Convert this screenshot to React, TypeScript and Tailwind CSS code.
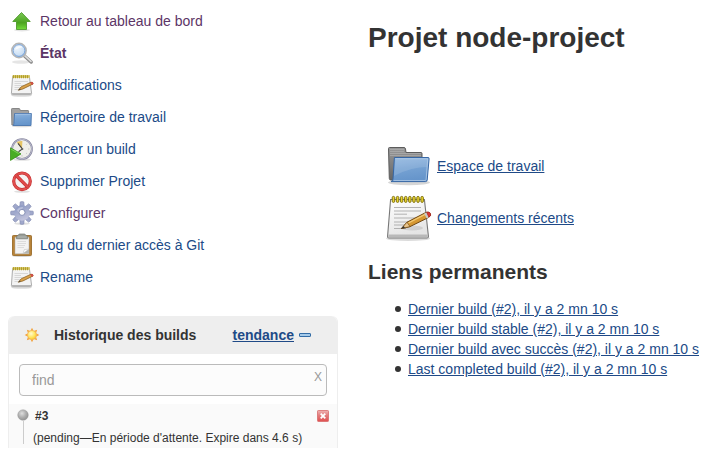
import type { ReactNode } from "react";

type IconProps = { className?: string };

function ArrowUpIcon({ className }: IconProps) {
  return (
    <svg viewBox="0 0 24 24" className={className} aria-hidden="true">
      <defs>
        <linearGradient id="arrowFill" x1="0" y1="0" x2="0" y2="1">
          <stop offset="0" stopColor="#7cc956" />
          <stop offset="0.6" stopColor="#4ba41f" />
          <stop offset="1" stopColor="#73dd3a" />
        </linearGradient>
      </defs>
      <ellipse cx="12" cy="21" rx="8" ry="1.4" fill="#000" opacity="0.1" />
      <path d="M11.5 3.5 L20.2 12.5 H16.5 V20.5 H6.5 V12.5 H2.8 Z" fill="url(#arrowFill)" stroke="#4f9a2c" strokeWidth="0.9" strokeLinejoin="round" />
    </svg>
  );
}

function SearchIcon({ className }: IconProps) {
  return (
    <svg viewBox="0 0 24 24" className={className} aria-hidden="true">
      <defs>
        <radialGradient id="lens" cx="0.4" cy="0.35" r="0.7">
          <stop offset="0" stopColor="#eef5fc" />
          <stop offset="0.7" stopColor="#c9def4" />
          <stop offset="1" stopColor="#a4c4e8" />
        </radialGradient>
      </defs>
      <ellipse cx="11" cy="21" rx="9" ry="1.8" fill="#000" opacity="0.1" />
      <path d="M14 14.5 L21.2 21" stroke="#8d8d8d" strokeWidth="3.4" strokeLinecap="round" />
      <path d="M14.6 14.6 L21 20.4" stroke="#dcdcdc" strokeWidth="1.6" strokeLinecap="round" />
      <circle cx="9" cy="9.5" r="7.2" fill="url(#lens)" stroke="#b4b4b4" strokeWidth="1.4" />
      <circle cx="9" cy="9.5" r="5.9" fill="none" stroke="#6f9bd1" strokeWidth="0.9" />
      <path d="M5 9 Q5.6 5.2 10 4.8 Q12 5 12.6 6.5 Q8 6.4 5 9" fill="#fff" opacity="0.7" />
    </svg>
  );
}

const ringPositions = [7, 11.1, 15.2, 19.3, 23.4, 27.5, 31.6, 35.7];

function NotepadIcon({ className }: IconProps) {
  return (
    <svg viewBox="0 0 48 48" className={className} aria-hidden="true">
      <defs>
        <linearGradient id="paper" x1="0" y1="0" x2="0.3" y2="1">
          <stop offset="0" stopColor="#ffffff" />
          <stop offset="1" stopColor="#e4e4e4" />
        </linearGradient>
      </defs>
      <ellipse cx="24" cy="44.5" rx="22" ry="2.5" fill="#000" opacity="0.14" />
      <path d="M6.6 5.5 H40.4 L44.4 42 Q44.6 44 42.8 44 H5 Q3.4 44 3.6 42 Z" fill="url(#paper)" stroke="#777" strokeWidth="1.1" />
      <path d="M4.4 40.5 H43.6 L43.8 43.3 H4.2 Z" fill="#b9b9b9" />
      <path d="M10 13.5 H37 M10 17 H37 M10 20.2 H23 M10 24 H36 M10 28 H29 M10 31 H26 M10 34.5 H22" stroke="#aaa" strokeWidth="0.9" />
      <ellipse cx="28" cy="34" rx="11" ry="2.5" fill="#000" opacity="0.1" />
      {ringPositions.map((x) => (
        <rect key={x} x={x + 1.2} y="2.4" width="2.5" height="6" rx="1.2" fill="#e9d42e" stroke="#77690b" strokeWidth="0.9" />
      ))}
      <path d="M17.5 34.5 L23 28.2 L42 18.4 Q46.8 17.4 46.5 21.6 L44.5 23.5 L26 32.6 Z" fill="#d69832" stroke="#6f4610" strokeWidth="1" strokeLinejoin="round" />
      <path d="M24.4 29 L41 20.4" stroke="#f2ca76" strokeWidth="1.4" />
      <path d="M40.2 19.4 L42.6 18.2 L44.9 23.2 L42.7 24.4 Z" fill="#c9c9c9" />
      <path d="M42.6 18.2 Q47 17.4 46.6 21.6 L44.9 23.2 Z" fill="#dc3535" stroke="#9e2222" strokeWidth="0.6" />
      <path d="M17.5 34.5 L23 28.2 L26 32.6 Z" fill="#e9c58d" stroke="#6f4610" strokeWidth="0.6" />
      <path d="M17 34.8 L19.6 32 L21 33.8 Z" fill="#333" />
    </svg>
  );
}

const smallRingPositions = [3, 5, 7, 9, 11, 13, 15, 17];

function SmallNotepadIcon({ className }: IconProps) {
  return (
    <svg viewBox="0 0 24 24" className={className} aria-hidden="true">
      <ellipse cx="11.5" cy="22.6" rx="10.5" ry="1.2" fill="#000" opacity="0.14" />
      <path d="M2.6 3.5 H19.4 L21.6 20.5 Q21.7 21.6 20.7 21.6 H2.2 Q1.3 21.6 1.4 20.5 Z" fill="#f3f3f3" stroke="#a3a3a3" strokeWidth="0.9" />
      <path d="M2 20 H21 V21.1 H2 Z" fill="#b5b5b5" />
      <path d="M4.5 8.5 H18 M4.5 10.5 H11 M4.5 12.5 H15 M4.5 14.5 H11 M4.5 16.5 H10" stroke="#cfcfcf" strokeWidth="0.8" />
      <path d="M2.5 3.5 H20" stroke="#d5c66a" strokeWidth="2.6" />
      {smallRingPositions.map((x) => (
        <rect key={x} x={x} y="2" width="1.1" height="3.2" rx="0.5" fill="#b39f25" />
      ))}
      <path d="M8.4 17.2 L11.2 13.8 L20.8 9.3 Q23.2 8.8 23.1 10.9 L13 15.9 Z" fill="#dba24b" stroke="#8f6526" strokeWidth="0.8" strokeLinejoin="round" />
      <path d="M20.6 9.4 Q23.3 8.8 23.1 10.9 L21.8 11.7 Z" fill="#e05555" stroke="#c03a3a" strokeWidth="0.5" />
      <path d="M8.2 17.4 L9.8 15.6 L10.7 16.6 Z" fill="#444" />
    </svg>
  );
}

function FolderIcon({ className }: IconProps) {
  return (
    <svg viewBox="0 0 48 48" className={className} aria-hidden="true">
      <defs>
        <linearGradient id="folderBack" x1="0" y1="0" x2="0" y2="1">
          <stop offset="0" stopColor="#999" />
          <stop offset="1" stopColor="#666" />
        </linearGradient>
        <linearGradient id="folderFront" x1="0" y1="0" x2="0.2" y2="1">
          <stop offset="0" stopColor="#90b6df" />
          <stop offset="0.5" stopColor="#76a2d3" />
          <stop offset="1" stopColor="#6695cb" />
        </linearGradient>
      </defs>
      <ellipse cx="25" cy="40.5" rx="21" ry="2.8" fill="#000" opacity="0.16" />
      <path d="M4.5 6.5 Q4.5 5.5 5.6 5.5 H20 Q21.3 5.5 21.5 7 L22 10.5 H37 Q38 10.5 38 11.5 V38 H7 Q5.4 38 5.3 36.5 Z" fill="url(#folderBack)" stroke="#5c5c5c" strokeWidth="1" />
      <path d="M6 7.5 H20 M6 9.5 H20 M6 11.5 H37 M6 13.5 H37" stroke="#b5b5b5" strokeWidth="0.6" />
      <path d="M10.4 15.5 H44 Q45.3 15.5 45.1 16.8 L43.2 38 Q43 39.6 41.5 39.6 H7 Q8.9 39 9 37 Z" fill="url(#folderFront)" stroke="#3767a5" strokeWidth="1" strokeLinejoin="round" />
      <path d="M11.2 16.7 H43.8 L42.1 37.5 Q42 38.5 41 38.5 H9.6" fill="none" stroke="#bad1ea" strokeWidth="0.7" />
      <path d="M11.5 17 H43.5 L42.8 25 Q28 25 12 33 L10 34 Z" fill="#fff" opacity="0.13" />
    </svg>
  );
}

function SmallFolderIcon({ className }: IconProps) {
  return (
    <svg viewBox="0 0 24 24" className={className} aria-hidden="true">
      <ellipse cx="12" cy="21.2" rx="10" ry="1" fill="#000" opacity="0.14" />
      <path d="M1.5 4.2 Q1.5 3.5 2.2 3.5 H9 Q9.7 3.5 9.9 4.3 L10.2 5.5 H18 Q18.6 5.5 18.6 6.1 V20 H1.9 Z" fill="#a2a2a2" stroke="#7f7f7f" strokeWidth="0.9" />
      <path d="M4.6 8.5 H21.4 L21 20.5 H3 Q3.8 20 3.9 18.6 Z" fill="url(#folderFront)" stroke="#4a76af" strokeWidth="0.9" strokeLinejoin="round" />
      <path d="M5.2 9.3 H20.6" stroke="#b4cdea" strokeWidth="0.6" />
    </svg>
  );
}

function ClockRunIcon({ className }: IconProps) {
  return (
    <svg viewBox="0 0 24 24" className={className} aria-hidden="true">
      <ellipse cx="12" cy="22.6" rx="9" ry="1.2" fill="#000" opacity="0.12" />
      <circle cx="12" cy="12" r="9.9" fill="#efefea" stroke="#84849c" strokeWidth="1.9" />
      <circle cx="12" cy="12" r="9.8" fill="none" stroke="#c6c6d8" strokeWidth="0.8" />
      <path d="M12 12 L6.8 5.2 Q9.4 3.8 12.4 4.1 Z" fill="#e6c566" />
      <path d="M8 6.4 L12.4 12 L8.5 14.7" fill="none" stroke="#444" strokeWidth="1.1" />
      <circle cx="12.4" cy="12" r="1" fill="#666" />
      <path d="M19.3 12 H18.3 M12 19.4 V18.4 M17 6.9 L16.4 7.5 M17 16.9 L16.4 16.3" stroke="#999" strokeWidth="0.7" />
      <path d="M0.5 10.8 L11 16.9 L0.5 23.4 Z" fill="#49ad25" stroke="#389319" strokeWidth="0.8" strokeLinejoin="round" />
      <path d="M1.2 12.2 L8.8 16.6" stroke="#8bda68" strokeWidth="0.8" />
    </svg>
  );
}

function ForbiddenIcon({ className }: IconProps) {
  return (
    <svg viewBox="0 0 24 24" className={className} aria-hidden="true">
      <ellipse cx="12" cy="22.6" rx="8" ry="1.2" fill="#000" opacity="0.12" />
      <circle cx="12" cy="12.3" r="8.3" fill="#f6f2f2" stroke="#c33030" strokeWidth="3.2" />
      <circle cx="12" cy="12.3" r="8.3" fill="none" stroke="#e25050" strokeWidth="1.9" />
      <path d="M6.2 6.5 L17.8 18.1" stroke="#c33030" strokeWidth="3.4" />
      <path d="M6 6.3 L18 18.3" stroke="#e04a4a" strokeWidth="2.1" />
    </svg>
  );
}

const gearAngles = [0, 45, 90, 135, 180, 225, 270, 315];

function GearIcon({ className }: IconProps) {
  return (
    <svg viewBox="0 0 24 24" className={className} aria-hidden="true">
      <defs>
        <linearGradient id="gearFill" x1="0" y1="0" x2="0.4" y2="1">
          <stop offset="0" stopColor="#8593bf" />
          <stop offset="1" stopColor="#c1c3dc" />
        </linearGradient>
      </defs>
      <ellipse cx="12" cy="22.6" rx="8" ry="1.2" fill="#000" opacity="0.12" />
      {gearAngles.map((angle) => (
        <path
          key={angle}
          d="M9.8 6 L10.2 0.9 Q12 0.3 13.8 0.9 L14.2 6 Z"
          transform={`rotate(${angle} 12 12)`}
          fill="#a0a8cb"
          stroke="#7d87ae"
          strokeWidth="0.6"
        />
      ))}
      <circle cx="12" cy="12" r="7.8" fill="url(#gearFill)" />
      <path d="M7 9 Q9 5.8 13 6 L12 9 Q9 9 8.6 12 Z" fill="#d0d4e8" opacity="0.6" />
      <circle cx="12" cy="11.4" r="3" fill="#fff" stroke="#7580aa" strokeWidth="0.8" />
    </svg>
  );
}

function ClipboardIcon({ className }: IconProps) {
  return (
    <svg viewBox="0 0 24 24" className={className} aria-hidden="true">
      <ellipse cx="12" cy="23" rx="10" ry="0.9" fill="#000" opacity="0.16" />
      <rect x="2.5" y="2.5" width="19" height="20" rx="0.8" fill="#b88338" stroke="#9a6c2a" strokeWidth="0.9" />
      <path d="M5 4.2 H19 V20.8 H5 Z" fill="#f3f3f3" stroke="#aaa" strokeWidth="0.5" />
      <path d="M7.5 8.5 H16 M7.5 10.5 H16 M7.5 12.5 H15 M7.5 14.5 H14" stroke="#ccc" strokeWidth="0.6" />
      <path d="M13 20.6 L14.4 16.6 L19 16 V20.6 Z" fill="#b3b5b0" />
      <path d="M13 20.6 L14.4 16.6 L19 16 Z" fill="#fff" stroke="#bbb" strokeWidth="0.4" />
      <path d="M6.4 5.8 V3.7 Q6.4 2.8 8 2.5 L9.2 1 H14.8 L16 2.5 Q17.6 2.8 17.6 3.7 V5.8 Z" fill="#989d98" stroke="#757a74" strokeWidth="0.7" />
      <path d="M7.4 4 H16.6" stroke="#c1c5c0" strokeWidth="0.7" />
    </svg>
  );
}

const rayAngles = [0, 45, 90, 135, 180, 225, 270, 315];

function SunIcon({ className }: IconProps) {
  return (
    <svg viewBox="0 0 16 16" className={className} aria-hidden="true">
      <defs>
        <radialGradient id="sunFill" cx="0.4" cy="0.35" r="0.7">
          <stop offset="0" stopColor="#fffad0" />
          <stop offset="0.6" stopColor="#ffe55e" />
          <stop offset="1" stopColor="#f8c42e" />
        </radialGradient>
      </defs>
      {rayAngles.map((angle) => (
        <path key={angle} d="M6.6 3.5 L8 0.7 L9.4 3.5 Z" transform={`rotate(${angle} 8 8)`} fill="#f3a13b" />
      ))}
      <circle cx="8" cy="8" r="4.5" fill="url(#sunFill)" stroke="#f2b04a" strokeWidth="0.8" />
    </svg>
  );
}

function BallIcon({ className }: IconProps) {
  return (
    <svg viewBox="0 0 14 14" className={className} aria-hidden="true">
      <defs>
        <radialGradient id="ballFill" cx="0.4" cy="0.35" r="0.7">
          <stop offset="0" stopColor="#dedede" />
          <stop offset="0.55" stopColor="#adadad" />
          <stop offset="1" stopColor="#8f8f8f" />
        </radialGradient>
      </defs>
      <circle cx="7" cy="7" r="6.2" fill="url(#ballFill)" stroke="#999" strokeWidth="0.5" />
    </svg>
  );
}

function StopIcon({ className }: IconProps) {
  return (
    <svg viewBox="0 0 12 12" className={className} aria-hidden="true">
      <defs>
        <linearGradient id="stopFill" x1="0" y1="0" x2="0" y2="1">
          <stop offset="0" stopColor="#eeb3b3" />
          <stop offset="0.45" stopColor="#e27c7c" />
          <stop offset="1" stopColor="#e04f4f" />
        </linearGradient>
      </defs>
      <rect x="0.5" y="0.5" width="11" height="11" rx="0.8" fill="url(#stopFill)" stroke="#d86c6c" strokeWidth="0.8" />
      <path d="M3.7 3.7 L8.3 8.3 M8.3 3.7 L3.7 8.3" stroke="#fff" strokeWidth="1.8" />
    </svg>
  );
}

function CollapseIcon({ className }: IconProps) {
  return (
    <svg viewBox="0 0 12 4" className={className} aria-hidden="true">
      <rect x="0.5" y="0.5" width="11" height="3" rx="0.4" fill="#a6cbea" stroke="#336ca6" />
    </svg>
  );
}

type Task = { label: string; icon: ReactNode; visited?: boolean; current?: boolean };

const iconSize = "size-6 shrink-0";

const tasks: Task[] = [
  { label: "Retour au tableau de bord", icon: <ArrowUpIcon className={iconSize} />, visited: true },
  { label: "État", icon: <SearchIcon className={iconSize} />, visited: true, current: true },
  { label: "Modifications", icon: <SmallNotepadIcon className={iconSize} /> },
  { label: "Répertoire de travail", icon: <SmallFolderIcon className={iconSize} /> },
  { label: "Lancer un build", icon: <ClockRunIcon className={iconSize} /> },
  { label: "Supprimer Projet", icon: <ForbiddenIcon className={iconSize} /> },
  { label: "Configurer", icon: <GearIcon className={iconSize} />, visited: true },
  { label: "Log du dernier accès à Git", icon: <ClipboardIcon className={iconSize} /> },
  { label: "Rename", icon: <SmallNotepadIcon className={iconSize} /> },
];

const permalinks = [
  "Dernier build (#2), il y a 2 mn 10 s",
  "Dernier build stable (#2), il y a 2 mn 10 s",
  "Dernier build avec succès (#2), il y a 2 mn 10 s",
  "Last completed build (#2), il y a 2 mn 10 s",
];

function TaskList() {
  return (
    <nav aria-label="Tâches">
      <ul>
        {tasks.map((task) => (
          <li key={task.label}>
            <a
              href="#"
              aria-current={task.current ? "page" : undefined}
              className={`flex h-8 items-center gap-1.5 pl-0.5 ${task.visited ? "text-[#5c3566]" : "text-[#204a87]"} ${task.current ? "font-bold" : ""}`}
            >
              {task.icon}
              {task.label}
            </a>
          </li>
        ))}
      </ul>
    </nav>
  );
}

function BuildHistory() {
  return (
    <section className="rounded-t-md border-x border-[#eee]">
      <header className="flex h-[38px] items-center rounded-t-md bg-[#eee] pr-[26px] pl-[15px] font-bold">
        <SunIcon className="mr-3.5 size-4" />
        <h2>Historique des builds</h2>
        <a href="#" className="ml-auto text-[#204a87] underline">
          tendance
        </a>
        <button type="button" aria-label="Réduire" className="ml-[5px]">
          <CollapseIcon className="h-1 w-3" />
        </button>
      </header>
      <div className="px-2.5 pt-2.5 pb-2">
        <div className="flex h-8 rounded-sm border border-[#bbb] bg-[#fcfcfc]">
          <input
            type="text"
            aria-label="Rechercher un build"
            placeholder="find"
            className="min-w-0 flex-1 bg-transparent pl-3 outline-none placeholder:text-[#999]"
          />
          <button type="button" aria-label="Effacer" className="self-start px-1 py-1 text-xs text-[#999]">
            X
          </button>
        </div>
      </div>
      <div className="flex bg-[#fafafa] px-2 text-xs">
        <div className="flex flex-col items-center pt-[5px]">
          <BallIcon className="size-3" />
          <div className="mb-1 w-px flex-1 bg-[#ccc]" />
        </div>
        <div className="flex-1 pl-1">
          <div className="flex h-6 items-center justify-between">
            <a href="#" className="pl-0.5 font-bold text-[#333]">
              #3
            </a>
            <button type="button" aria-label="Annuler le build">
              <StopIcon className="size-3" />
            </button>
          </div>
          <p className="leading-5">(pending—En période d'attente. Expire dans 4.6 s)</p>
        </div>
      </div>
    </section>
  );
}

export default function App() {
  return (
    <div className="flex gap-[30px] bg-white pl-2 font-['Liberation_Sans',Arial,sans-serif] text-sm text-[#333]">
      <aside className="w-[330px] shrink-0 pt-[5px]">
        <TaskList />
        <div className="pt-[23px]">
          <BuildHistory />
        </div>
      </aside>
      <main className="min-w-0 flex-1 pt-[22px]">
        <h1 className="text-[28px] leading-8 font-bold">Projet node-project</h1>
        <ul className="mt-[86px] pl-4">
          <li className="flex h-[52px] items-center gap-[5px]">
            <FolderIcon className="size-12 shrink-0" />
            <a href="#" className="text-[#204a87] underline">
              Espace de travail
            </a>
          </li>
          <li className="flex h-[52px] items-center gap-[5px]">
            <NotepadIcon className="size-12 shrink-0" />
            <a href="#" className="text-[#204a87] underline">
              Changements récents
            </a>
          </li>
        </ul>
        <h2 className="mt-4 text-[21px] leading-6 font-bold">Liens permanents</h2>
        <ul className="mt-[15px] pl-[27px]">
          {permalinks.map((label) => (
            <li
              key={label}
              className="flex items-center gap-[7px] leading-5 before:size-1.5 before:shrink-0 before:rounded-full before:bg-[#333]"
            >
              <a href="#" className="text-[#204a87] underline">
                {label}
              </a>
            </li>
          ))}
        </ul>
      </main>
    </div>
  );
}
